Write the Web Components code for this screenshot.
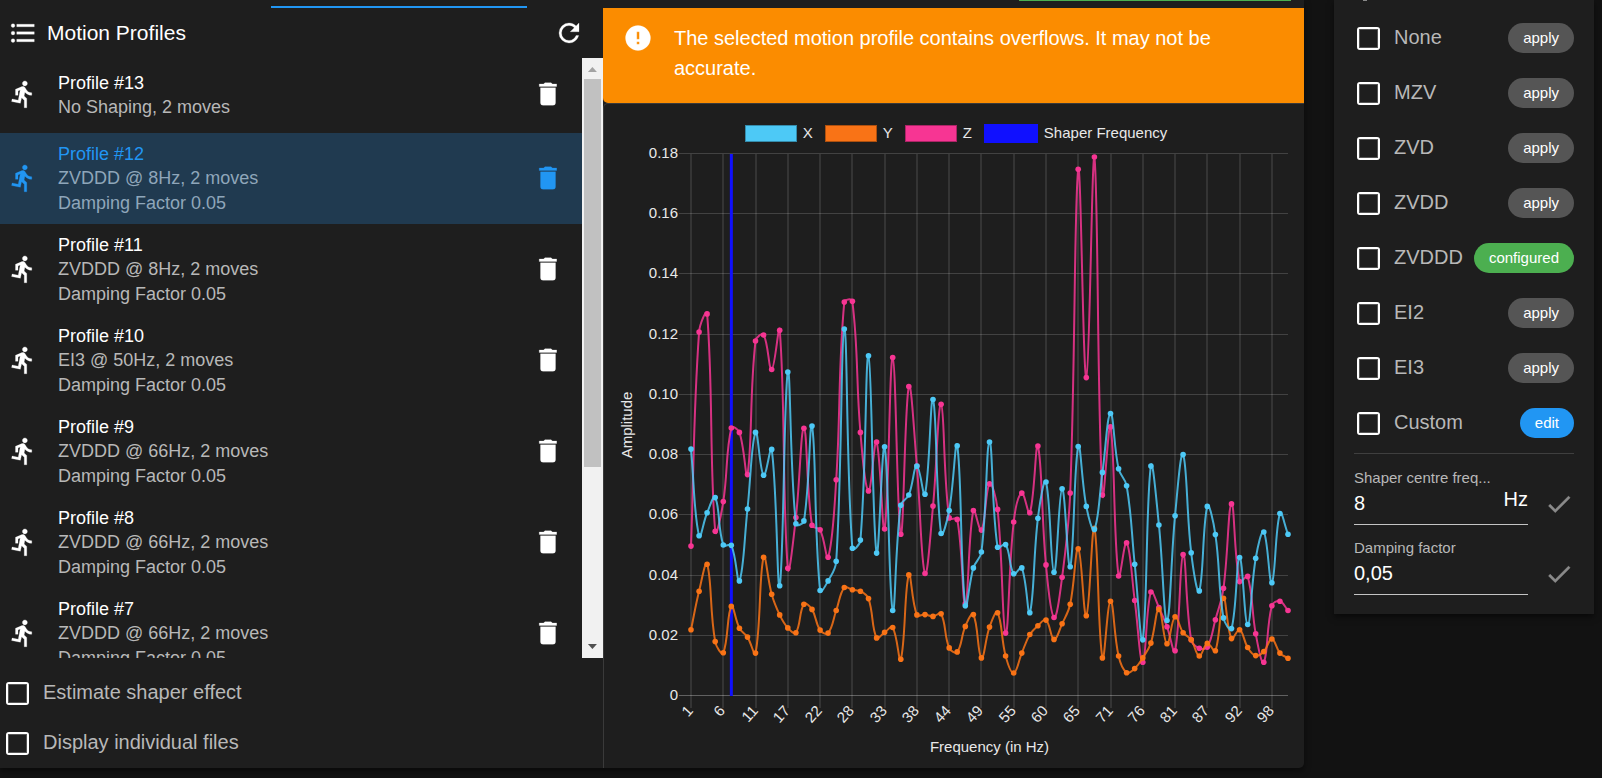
<!DOCTYPE html>
<html lang="en">
<head>
<meta charset="utf-8">
<meta name="viewport" content="width=device-width, initial-scale=1">
<title>Input Shaping</title>
<style>
  html { background: #121212; }
  body {
    margin: 0;
    background: #121212;
    color: #fff;
    font-family: "Liberation Sans", Arial, sans-serif;
    font-size: 20px;
    line-height: 30px;
  }
</style>
</head>
<body>
<shaping-app></shaping-app>

<script>
const ICONS = {
  list: 'M7,5H21V7H7V5M7,13V11H21V13H7M4,4.5A1.5,1.5 0 0,1 5.5,6A1.5,1.5 0 0,1 4,7.5A1.5,1.5 0 0,1 2.5,6A1.5,1.5 0 0,1 4,4.5M4,10.5A1.5,1.5 0 0,1 5.5,12A1.5,1.5 0 0,1 4,13.5A1.5,1.5 0 0,1 2.5,12A1.5,1.5 0 0,1 4,10.5M7,19V17H21V19H7M4,16.5A1.5,1.5 0 0,1 5.5,18A1.5,1.5 0 0,1 4,19.5A1.5,1.5 0 0,1 2.5,18A1.5,1.5 0 0,1 4,16.5Z',
  refresh: 'M17.65,6.35C16.2,4.9 14.21,4 12,4A8,8 0 0,0 4,12A8,8 0 0,0 12,20C15.73,20 18.84,17.45 19.73,14H17.65C16.83,16.33 14.61,18 12,18A6,6 0 0,1 6,12A6,6 0 0,1 12,6C13.66,6 15.14,6.69 16.22,7.78L13,11H20V4L17.65,6.35Z',
  run: 'M13.5,5.5C14.59,5.5 15.5,4.58 15.5,3.5C15.5,2.38 14.59,1.5 13.5,1.5C12.39,1.5 11.5,2.38 11.5,3.5C11.5,4.58 12.39,5.5 13.5,5.5M9.89,19.38L10.89,15L13,17V23H15V15.5L12.89,13.5L13.5,10.5C14.79,12 16.79,13 19,13V11C17.09,11 15.5,10 14.69,8.58L13.69,7C13.29,6.38 12.69,6 12,6C11.69,6 11.5,6.08 11.19,6.08L6,8.28V13H8V9.58L9.79,8.88L8.19,17L3.29,16L2.89,18L9.89,19.38Z',
  trash: 'M19,4H15.5L14.5,3H9.5L8.5,4H5V6H19M6,19A2,2 0 0,0 8,21H16A2,2 0 0,0 18,19V7H6V19Z',
  alert: 'M13,13H11V7H13M13,17H11V15H13M12,2A10,10 0 0,0 2,12A10,10 0 0,0 12,22A10,10 0 0,0 22,12A10,10 0 0,0 12,2Z',
  check: 'M21,7L9,19L3.5,13.5L4.91,12.09L9,16.17L19.59,5.59L21,7Z'
};

class MdIcon extends HTMLElement {
  connectedCallback() {
    if (this.shadowRoot) return;
    this.attachShadow({ mode: 'open' }).innerHTML = `
      <style>
        :host { display: block; flex: none; width: 30px; height: 30px; }
        svg { display: block; width: 100%; height: 100%; fill: currentColor; stroke: currentColor; stroke-width: .2; }
      </style>
      <svg viewBox="0 0 24 24" aria-hidden="true"><path d="${ICONS[this.getAttribute('name')]}"/></svg>`;
  }
}
customElements.define('md-icon', MdIcon);

class CheckField extends HTMLElement {
  connectedCallback() {
    if (this.shadowRoot) return;
    this.attachShadow({ mode: 'open' }).innerHTML = `
      <style>
        :host { display: block; }
        label { display: flex; align-items: center; gap: 14px; color: #b8b8b8; line-height: 28px; cursor: pointer; }
        input {
          appearance: none; flex: none; box-sizing: border-box; width: 23px; height: 23px; margin: 0;
          border: 2px solid #fff; border-radius: 3px; outline: 1px solid #555; outline-offset: -3px;
        }
        input:checked { background: #2196f3; }
        span { padding-bottom: 2px; }
      </style>
      <label><input type="checkbox"><span><slot></slot></span></label>`;
  }
}
customElements.define('check-field', CheckField);

class ProfileItem extends HTMLElement {
  connectedCallback() {
    if (this.shadowRoot) return;
    this.attachShadow({ mode: 'open' }).innerHTML = `
      <style>
        :host {
          display: flex; align-items: center; box-sizing: border-box; flex: none;
          min-height: 75px; padding: 8px 19px 8px 8px; font-size: 18px;
        }
        :host([two-line]) { padding-bottom: 10px; }
        :host([selected]) { background: #203a50; --title: #2196f3; --sub: #8fa6ba; color: #2196f3; }
        .text { flex: 1; min-width: 0; margin-left: 20px; padding-top: 1px; }
        .title { line-height: 24px; color: var(--title, #fff); }
        .sub { line-height: 25px; color: var(--sub, #b8b8b8); }
        md-icon { margin-bottom: 1px; }
        button { flex: none; padding: 0; border: 0; background: none; color: inherit; cursor: pointer; }
      </style>
      <md-icon name="run"></md-icon>
      <div class="text">
        <div class="title"><slot></slot></div>
        <div class="sub"><slot name="mode"></slot></div>
        <div class="sub"><slot name="damping"></slot></div>
      </div>
      <button type="button" aria-label="Delete profile"><md-icon name="trash"></md-icon></button>`;
  }
}
customElements.define('profile-item', ProfileItem);

class ProfileList extends HTMLElement {
  connectedCallback() {
    if (this.shadowRoot) return;
    const profiles = [
      [13, 'No Shaping, 2 moves', ''],
      [12, 'ZVDDD @ 8Hz, 2 moves', 'Damping Factor 0.05'],
      [11, 'ZVDDD @ 8Hz, 2 moves', 'Damping Factor 0.05'],
      [10, 'EI3 @ 50Hz, 2 moves', 'Damping Factor 0.05'],
      [9, 'ZVDDD @ 66Hz, 2 moves', 'Damping Factor 0.05'],
      [8, 'ZVDDD @ 66Hz, 2 moves', 'Damping Factor 0.05'],
      [7, 'ZVDDD @ 66Hz, 2 moves', 'Damping Factor 0.05']
    ];
    this.attachShadow({ mode: 'open' }).innerHTML = `
      <style>
        :host { display: flex; flex-direction: column; min-width: 0; }
        header { display: flex; align-items: center; padding: 10px 19px 10px 8px; }
        h2 { flex: 1; margin: 0 0 0 9px; font-size: 21px; font-weight: 400; }
        button { flex: none; padding: 0; border: 0; background: none; color: inherit; cursor: pointer; }
        .scroller { display: flex; height: 600px; }
        .items { flex: 1; min-width: 0; display: flex; flex-direction: column; overflow-y: auto; scrollbar-width: none; }
        .bar { flex: none; display: flex; flex-direction: column; align-items: center; width: 21px; background: #f1f1f1; }
        .arrow { width: 9px; height: 5px; margin: 9px 0 7px; background: #a3a3a3; clip-path: polygon(50% 0, 100% 100%, 0 100%); }
        .arrow.down { margin: 7px 0 9px; background: #505050; clip-path: polygon(0 0, 100% 0, 50% 100%); }
        .track { flex: 1; width: 17px; }
        .thumb { height: 388px; background: #c1c1c1; }
        .options { display: grid; gap: 20px; padding: 20px 6px 10px; }
      </style>
      <header>
        <md-icon name="list"></md-icon>
        <h2>Motion Profiles</h2>
        <button type="button" aria-label="Refresh"><md-icon name="refresh"></md-icon></button>
      </header>
      <div class="scroller">
        <div class="items">
          ${profiles.map(([n, mode, damping]) => `
            <profile-item${n === 12 ? ' selected' : ''}${damping ? '' : ' two-line'}>Profile #${n}<span slot="mode">${mode}</span>${damping ? `<span slot="damping">${damping}</span>` : ''}</profile-item>`).join('')}
        </div>
        <div class="bar" aria-hidden="true">
          <div class="arrow"></div>
          <div class="track"><div class="thumb"></div></div>
          <div class="arrow down"></div>
        </div>
      </div>
      <div class="options">
        <check-field>Estimate shaper effect</check-field>
        <check-field>Display individual files</check-field>
      </div>`;
  }
}
customElements.define('profile-list', ProfileList);

class WarningBanner extends HTMLElement {
  connectedCallback() {
    if (this.shadowRoot) return;
    this.attachShadow({ mode: 'open' }).innerHTML = `
      <style>
        :host { display: flex; align-items: flex-start; gap: 21px; padding: 15px 20px 20px; background: #fb8c00; border-radius: 0 0 0 5px; }
        .text { flex: 1; }
      </style>
      <md-icon name="alert"></md-icon>
      <div class="text" role="alert"><slot></slot></div>`;
  }
}
customElements.define('warning-banner', WarningBanner);

const ZERO = 1501, FULL = 1464;
const SERIES = [
  { name: 'Z', color: '#f73593', data: [1096,518,469,1056,976,777,789,903,542,526,619,513,1156,1019,778,1040,1052,1126,917,437,435,789,947,815,1050,587,1064,665,880,1170,988,713,1020,1024,1252,1000,1053,928,997,1331,1031,953,1006,826,1147,1289,1180,953,78,641,45,958,774,1177,1087,1243,1410,1220,1262,1314,1379,1119,1349,1372,1369,1295,1210,982,1192,1178,1333,1410,1257,1245,1270] },
  { name: 'Y', color: '#f97316', data: [1322,1218,1145,1354,1384,1259,1318,1342,1385,1126,1226,1282,1317,1330,1253,1267,1323,1331,1270,1208,1214,1218,1238,1344,1329,1316,1402,1174,1282,1281,1286,1279,1371,1382,1313,1281,1398,1315,1276,1393,1439,1385,1335,1311,1296,1348,1306,1253,1103,1284,1048,1398,1245,1393,1438,1427,1398,1358,1267,1360,1287,1330,1349,1393,1359,1379,1237,1346,1322,1370,1392,1381,1347,1385,1399] },
  { name: 'X', color: '#4dc9f6', data: [834,1068,1006,965,1093,1094,1190,996,789,905,835,1203,626,1036,1028,772,1216,1190,1137,510,1102,1080,582,1115,828,1270,986,958,880,956,700,1062,1000,825,1257,1155,1112,815,1099,1092,1171,1155,1276,1021,923,1167,941,1152,827,989,1051,897,738,887,933,1145,1349,880,1039,1297,1014,849,1114,1217,989,1065,1290,1319,1127,1308,1129,1058,1195,1008,1064] }
];
const X_TICKS = [1, 6, 11, 17, 22, 28, 33, 38, 44, 49, 55, 60, 65, 71, 76, 81, 87, 92, 98];
const Y_TICKS = ['0', '0.02', '0.04', '0.06', '0.08', '0.10', '0.12', '0.14', '0.16', '0.18'];

class AmplitudeChart extends HTMLElement {
  connectedCallback() {
    if (!this.shadowRoot) {
      this.attachShadow({ mode: 'open' }).innerHTML = `
        <style>
          :host { display: block; min-width: 0; border-left: 1px solid #3a3a3a; border-top: 1px solid #3a3a3a; border-radius: 5px 0 0 0; font-size: 15px; color: #e8e8e8; }
          ul { display: flex; justify-content: center; gap: 12px; margin: 0; padding: 19px 0 2px 4px; list-style: none; line-height: 20px; }
          li { display: flex; align-items: center; gap: 6px; }
          i { box-sizing: border-box; width: 52px; height: 17px; background: var(--c); border: 1px solid rgba(0, 0, 0, .3); }
          .wide { width: 54px; height: 19px; border: 0; }
          svg { display: block; width: 100%; height: 623px; }
          text { font-family: inherit; font-size: 15px; fill: #e8e8e8; }
        </style>
        <ul>
          <li><i style="--c:#4dc9f6"></i>X</li>
          <li><i style="--c:#f97316"></i>Y</li>
          <li><i style="--c:#f73593"></i>Z</li>
          <li><i class="wide" style="--c:#1010ff"></i>Shaper Frequency</li>
        </ul>
        <svg role="img" aria-label="Amplitude by frequency"></svg>`;
    }
    this.svg = this.shadowRoot.querySelector('svg');
    this.draw();
    this.observer = new ResizeObserver(() => this.draw());
    this.observer.observe(this);
  }
  disconnectedCallback() { this.observer.disconnect(); }

  curve(pts, top, bottom) {
    const tension = 0.4;
    const clamp = y => Math.min(bottom, Math.max(top, y));
    const cps = pts.map((p, i) => {
      const a = pts[i - 1] || p, b = pts[i + 1] || p;
      const d0 = Math.hypot(p[0] - a[0], p[1] - a[1]);
      const d1 = Math.hypot(b[0] - p[0], b[1] - p[1]);
      const f0 = tension * d0 / (d0 + d1), f1 = tension * d1 / (d0 + d1);
      return [
        [p[0] - f0 * (b[0] - a[0]), clamp(p[1] - f0 * (b[1] - a[1]))],
        [p[0] + f1 * (b[0] - a[0]), clamp(p[1] + f1 * (b[1] - a[1]))]
      ];
    });
    return 'M' + pts[0].join() + pts.slice(1).map((p, i) =>
      'C' + [cps[i][1], cps[i + 1][0], p].map(q => q.map(v => v.toFixed(2)).join()).join(' ')).join('');
  }

  draw() {
    const w = this.svg.clientWidth;
    if (!w || w === this.drawn) return;
    this.drawn = w;
    const left = 87, right = w - 16, top = 9, bottom = 551;
    const step = (right - left) / 74;
    let out = '';
    Y_TICKS.forEach((t, i) => {
      const y = Math.round(bottom - i * (bottom - top) / 9) - 0.5;
      out += `<path d="M${left - 12},${y}H${right}" stroke="#fff" stroke-opacity="${i ? 0.16 : 0.3}"/>
        <text x="${left - 13}" y="${y + 4.5}" text-anchor="end">${t}</text>`;
    });
    X_TICKS.forEach((t, i) => {
      const x = Math.round(left + i * 4 * step);
      out += `<path d="M${x},${top}V${bottom + 12}" stroke="#fff" stroke-opacity=".1" stroke-width="2"/>
        <text transform="translate(${x - 1},${bottom + 12}) rotate(-48)" y="5" text-anchor="end">${t}</text>`;
    });
    const sx = left + 5 * step;
    out += `<path d="M${sx},${top}V${bottom}" stroke="#1010ff" stroke-width="3"/>`;
    for (const s of SERIES) {
      const pts = s.data.map((v, i) => [left + i * step, bottom - (ZERO - v) / FULL * (bottom - top)]);
      out += `<path d="${this.curve(pts, top, bottom)}" fill="none" stroke="${s.color}" stroke-opacity=".85" stroke-width="2"/>`;
      out += pts.map(p => `<circle cx="${p[0].toFixed(1)}" cy="${p[1].toFixed(1)}" r="2.8" fill="${s.color}"/>`).join('');
    }
    const mx = (left + right) / 2, my = (top + bottom) / 2;
    out += `<text x="${mx}" y="607" text-anchor="middle">Frequency (in Hz)</text>
      <text transform="translate(28,${my}) rotate(-90)" text-anchor="middle">Amplitude</text>`;
    this.svg.innerHTML = out;
  }
}
customElements.define('amplitude-chart', AmplitudeChart);

class ShaperOption extends HTMLElement {
  connectedCallback() {
    if (this.shadowRoot) return;
    const action = this.getAttribute('action');
    this.attachShadow({ mode: 'open' }).innerHTML = `
      <style>
        :host { display: flex; align-items: center; justify-content: space-between; height: 30px; padding-left: 3px; }
        button {
          height: 30px; padding: 0 15px 1px; border: 0; border-radius: 15px;
          background: #555; color: #fff; font: 15px "Liberation Sans", Arial, sans-serif; cursor: pointer;
        }
        .configured { background: #4caf50; }
        .edit { background: #2196f3; }
      </style>
      <check-field><slot></slot></check-field>
      <button type="button" class="${action}">${action}</button>`;
  }
}
customElements.define('shaper-option', ShaperOption);

class NumberField extends HTMLElement {
  connectedCallback() {
    if (this.shadowRoot) return;
    const unit = this.getAttribute('unit');
    this.attachShadow({ mode: 'open' }).innerHTML = `
      <style>
        :host { display: flex; align-items: flex-end; gap: 16px; min-width: 0; color: #8a8a8a; }
        .field { flex: 1; min-width: 0; border-bottom: 1px solid #c4c4c4; }
        label { display: block; overflow: hidden; font-size: 15px; line-height: 20px; color: #b8b8b8; white-space: nowrap; }
        .row { display: flex; align-items: flex-start; height: 36px; color: #fff; }
        input { flex: 1; width: 0; min-width: 0; height: 30px; padding: 0; border: 0; outline: 0; background: none; color: #fff; font: 20px "Liberation Sans", Arial, sans-serif; }
        .unit { flex: none; line-height: 22px; }
        button { flex: none; padding: 0 0 6px; border: 0; background: none; color: inherit; cursor: pointer; }
      </style>
      <div class="field">
        <label for="v"><slot></slot></label>
        <div class="row"><input id="v" type="text" value="${this.getAttribute('value')}">${unit ? `<span class="unit">${unit}</span>` : ''}</div>
      </div>
      <button type="button" aria-label="Confirm"><md-icon name="check"></md-icon></button>`;
  }
}
customElements.define('number-field', NumberField);

class ShaperPanel extends HTMLElement {
  connectedCallback() {
    if (this.shadowRoot) return;
    const options = [['None', 'apply'], ['MZV', 'apply'], ['ZVD', 'apply'], ['ZVDD', 'apply'],
      ['ZVDDD', 'configured'], ['EI2', 'apply'], ['EI3', 'apply'], ['Custom', 'edit']];
    this.attachShadow({ mode: 'open' }).innerHTML = `
      <style>
        :host {
          display: block; padding: 23px 20px 19px;
          background: linear-gradient(#888, #888) 29px 0 / 4px 1px no-repeat, #1e1e1e;
          box-shadow: 0 3px 6px rgba(0, 0, 0, .5);
        }
        .options { display: grid; gap: 25px; }
        hr { height: 1px; margin: 15px 0 14px; border: 0; background: #3f3f3f; }
        .fields { display: grid; grid-template-columns: minmax(0, 1fr); gap: 13px; }
      </style>
      <div class="options">${options.map(([n, a]) => `<shaper-option action="${a}">${n}</shaper-option>`).join('')}</div>
      <hr>
      <div class="fields">
        <number-field value="8" unit="Hz">Shaper centre freq...</number-field>
        <number-field value="0,05">Damping factor</number-field>
      </div>`;
  }
}
customElements.define('shaper-panel', ShaperPanel);

class ShapingApp extends HTMLElement {
  connectedCallback() {
    if (this.shadowRoot) return;
    this.attachShadow({ mode: 'open' }).innerHTML = `
      <style>
        :host { display: flex; align-items: flex-start; gap: 30px; padding: 0 8px 10px 0; }
        main { flex: 1; min-width: 0; background: #1e1e1e; border-radius: 0 0 5px 0; box-shadow: 0 3px 6px rgba(0, 0, 0, .5); }
        .tabs { display: flex; align-items: flex-end; justify-content: space-between; height: 8px; padding: 0 13px 0 271px; }
        .current { width: 256px; height: 2px; background: #2196f3; }
        .action { align-self: flex-start; width: 272px; height: 1px; background: #4caf50; }
        .columns { display: grid; grid-template-columns: minmax(0, 86fr) minmax(0, 100fr); }
        aside { flex: none; width: 260px; }
      </style>
      <main>
        <div class="tabs" aria-hidden="true"><div class="current"></div><div class="action"></div></div>
        <div class="columns">
          <profile-list></profile-list>
          <section>
            <warning-banner>The selected motion profile contains overflows. It may not be accurate.</warning-banner>
            <amplitude-chart></amplitude-chart>
          </section>
        </div>
      </main>
      <aside><shaper-panel></shaper-panel></aside>`;
  }
}
customElements.define('shaping-app', ShapingApp);
</script>
</body>
</html>
